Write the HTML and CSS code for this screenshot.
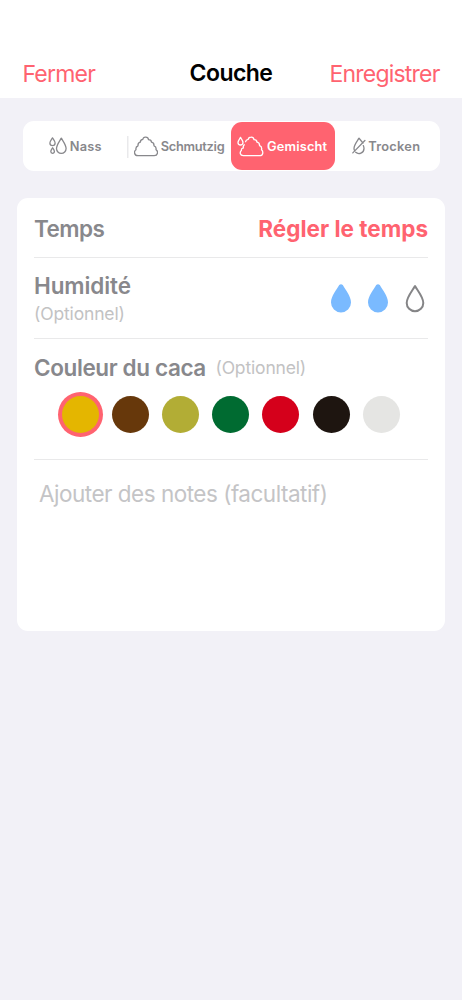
FILE: index.html
```html
<!DOCTYPE html>
<html lang="fr">
<head>
<meta charset="utf-8">
<title>Couche</title>
<link rel="stylesheet" href="styles.css">
</head>
<body>
<header class="navbar">
  <a class="nav-action cancel">Fermer</a>
  <h1 class="nav-title">Couche</h1>
  <a class="nav-action save">Enregistrer</a>
</header>
<main>
  <nav class="segments">
    <div class="segment nass">
      <svg class="icon" width="19" height="18" viewBox="0 0 19 18"><path d="M12.3 1.2C10.5 4.3 7.5 7.9 7.5 11.6a4.8 4.8 0 0 0 9.6 0C17.1 7.9 14.1 4.3 12.3 1.2Z"/><path d="M3.5.9C2.5 2.5.9 4.4.9 6.1a2.6 2.6 0 0 0 5.2 0C6.1 4.4 4.5 2.5 3.5.9Z"/><path d="M3.6 10.800C2.9 12 1.800 13.200 1.800 14.600a1.800 1.800 0 0 0 3.600 0C5.400 13.200 4.300 12 3.600 10.800Z"/></svg>
      <span>Nass</span>
    </div>
    <div class="segment schmutzig">
      <svg class="icon" width="24" height="21" viewBox="0 0 24 21"><path d="M3.900 19.700h16.300c4 0 4.100-4.600 1.800-6 .4-2-.6-3.400-2-3.900.1-1.900-.8-3.300-2.500-3.600-.1-1.500-1.200-2.600-3-2.600-.2-1.600-1.400-2.600-3-2.500C9.900 1 8.900 1.900 8.900 3.300c-1.600.1-2.600 1.300-2.600 2.900C4.700 6.600 3.800 8 4 9.800c-1.500.6-2.400 2-2 3.900-2.300 1.400-2 6 1.900 6Z"/></svg>
      <span>Schmutzig</span>
    </div>
    <div class="segment active gemischt">
      <svg class="icon" width="27" height="21" viewBox="0 0 27 21"><path d="M6.300 19.700h16.300c3.900 0 3.800-4.500 1.900-5.900.5-2-.5-3.600-1.900-4.100 0-2.100-1-3.400-2.600-3.600-.1-1.600-1.300-2.500-3-2.500-.2-1.600-1.400-2.600-3-2.500-1.600 0-2.600.9-2.700 2.200-1.500.2-2.500.9-2.700 2.300M7.200 8.700c-1 1.100-1.200 2.200-.8 3.200-1.700.5-2.300 1.600-2 2.700-2 1.700-1.400 5.100 1.900 5.100"/><path d="M3.500 1.400C2.700 2.800 1 4.800 1 6.500a2.500 2.500 0 0 0 5 0C6 4.800 4.300 2.800 3.500 1.400Z"/></svg>
      <span>Gemischt</span>
    </div>
    <div class="segment trocken">
      <svg class="icon" width="14" height="18" viewBox="0 0 14 18"><path d="M11 6.100C9.500 4.300 8 2.500 7 1.200 5.200 4.200 2.100 7.800 2 11.400q0 1 .4 1.900M3.700 15.300c3.100 2.700 8.100.8 8.300-3.700q0-1.500-.7-3M.8 15.900 12.900 3.500"/></svg>
      <span>Trocken</span>
    </div>
  </nav>
  <section class="card">
    <div class="row time-row">
      <h2 class="label temps">Temps</h2>
      <a class="set-time">Régler le temps</a>
    </div>
    <div class="row wet-row">
      <div>
        <h2 class="label humidite">Humidité</h2>
        <p class="optional">(Optionnel)</p>
      </div>
      <div class="drops">
        <svg class="drop full" width="20" height="29" viewBox="0 0 20 29"><path d="M8.200 1.100Q10-.7 11.800 1.100C14.200 5.400 20 12.300 20 18.500a10 10 0 0 1-20 0C0 12.300 5.800 5.400 8.200 1.100Z"/></svg>
        <svg class="drop full" width="20" height="29" viewBox="0 0 20 29"><path d="M8.200 1.100Q10-.7 11.800 1.100C14.200 5.400 20 12.300 20 18.500a10 10 0 0 1-20 0C0 12.300 5.800 5.400 8.200 1.100Z"/></svg>
        <svg class="drop" width="20" height="29" viewBox="0 0 20 29"><path d="M10 2C7.500 6.500 1.700 13 1.700 18.900a8.300 8.300 0 0 0 16.600 0C18.300 13 12.500 6.500 10 2Z"/></svg>
      </div>
    </div>
    <div class="row color-row">
      <div class="color-head">
        <h2 class="label couleur">Couleur du caca</h2>
        <p class="optional">(Optionnel)</p>
      </div>
      <div class="swatches">
        <i class="swatch mustard selected"></i>
        <i class="swatch brown"></i>
        <i class="swatch olive"></i>
        <i class="swatch green"></i>
        <i class="swatch red"></i>
        <i class="swatch black"></i>
        <i class="swatch grey"></i>
      </div>
    </div>
    <div class="notes"><span>Ajouter des notes (facultatif)</span></div>
  </section>
</main>
</body>
</html>
```

FILE: styles.css
```css
* { box-sizing: border-box; }
body {
  margin: 0;
  min-height: 1000px;
  background: #f2f1f7;
  font-family: Inter, "Liberation Sans", sans-serif;
  color: #88888c;
}
h1, h2, p { margin: 0; font-weight: 400; }
svg { display: block; flex: none; }
.navbar {
  height: 98px;
  padding: 59px 22.500px 0 22.500px;
  background: #fff;
  display: grid;
  grid-template-columns: 1fr auto 1fr;
  white-space: nowrap;
}
.nav-action {
  color: #ff6370;
  font-size: 23px;
  line-height: 30px;
  letter-spacing: -0.8px;
}
.save { text-align: right; }
.nav-title {
  color: #000;
  font-size: 23px;
  line-height: 28px;
  font-weight: 600;
  letter-spacing: -0.55px;
}
.segments {
  margin: 23px 22.500px 0;
  height: 50px;
  border-radius: 11px;
  background: #fff;
  display: grid;
  grid-template-columns: repeat(4, 1fr);
  align-items: center;
}
.segment {
  height: 48px;
  display: flex;
  align-items: center;
  justify-content: flex-start;
  font-size: 12.800px;
  line-height: 15px;
  font-weight: 600;
  white-space: nowrap;
}
.icon { fill: none; stroke: currentColor; stroke-width: 1.300; stroke-linejoin: round; stroke-linecap: round; }
.nass { padding-left: 26.500px; gap: 1.700px; letter-spacing: 0.25px; }
.schmutzig { padding-left: 7px; gap: 3px; letter-spacing: -0.27px; background: linear-gradient(#e9e9eb, #e9e9eb) 0 14px / 1.500px 22px no-repeat; }
.gemischt { padding-left: 6px; gap: 3px; letter-spacing: 0.18px; }
.trocken { padding-left: 16.500px; gap: 2.500px; letter-spacing: 0.27px; }
.active { background: #ff6370; color: #fff; border-radius: 11px; }
.card {
  margin: 27px 17px 0;
  height: 433px;
  padding: 0 17px;
  background: #fff;
  border-radius: 11px;
}
.row { border-bottom: 1.500px solid #e9e9ea; }
.label {
  font-size: 22.500px;
  line-height: 28px;
  font-weight: 600;
  white-space: nowrap;
}
.temps { letter-spacing: -0.55px; }
.humidite { letter-spacing: -0.1px; }
.couleur { letter-spacing: -0.38px; }
.optional {
  font-size: 17.500px;
  line-height: 22px;
  letter-spacing: -0.16px;
  color: #c2c2c3;
}
.time-row {
  height: 60px;
  padding-top: 17px;
  display: flex;
  justify-content: space-between;
}
.set-time {
  color: #ff6370;
  font-size: 22.500px;
  line-height: 28px;
  font-weight: 700;
  letter-spacing: 0;
}
.wet-row {
  height: 81px;
  padding: 14px 3.500px 0 0;
  display: flex;
  justify-content: space-between;
}
.wet-row .optional { margin-top: 3px; }
.drops { display: flex; gap: 17px; padding-top: 12px; }
.drop { fill: none; stroke: #858587; stroke-width: 2; stroke-linejoin: round; }
.full { fill: #7abaff; stroke: none; }
.color-row { height: 121px; padding-top: 15px; }
.color-head { display: flex; align-items: center; gap: 9.500px; }
.swatches { display: flex; gap: 13.150px; padding: 14px 0 0 27.800px; }
.swatch { width: 37px; height: 37px; border-radius: 50%; }
.selected { box-shadow: 0 0 0 4px #ff6370; }
.mustard { background: #e4b600; }
.brown { background: #67380b; }
.olive { background: #b2ad35; }
.green { background: #006b31; }
.red { background: #d5001b; }
.black { background: #1e1510; }
.grey { background: #e5e5e3; }
.notes {
  padding: 19px 5px 0;
  font-size: 22.500px;
  line-height: 30px;
  letter-spacing: -0.5px;
  color: #c4c4c6;
}
```
